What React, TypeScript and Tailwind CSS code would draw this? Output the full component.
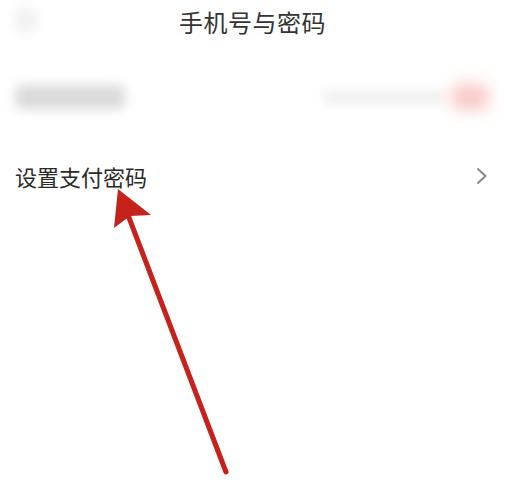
import React from "react";

export default function App() {
  const font = { fontFamily: '"Noto Sans CJK SC", "Noto Sans", sans-serif' };
  return (
    <div className="relative w-[505px] h-[488px] bg-white overflow-hidden" style={font}>
      {/* header */}
      <div className="relative h-[44px] flex items-center justify-center">
        <div className="absolute left-[14px] top-[6px] w-[24px] h-[28px] rounded-full bg-[#f2f2f2] blur-[5px]" />
        <span className="text-[24px] leading-none text-[#333] tracking-[0.5px]">手机号与密码</span>
      </div>
      {/* blurred row */}
      <div className="h-[62px] mt-[22px] flex items-center px-[15px]">
        <div className="w-[110px] h-[24px] bg-[#dadada] rounded-[6px] blur-[6px]" />
        <div className="ml-auto flex items-center gap-[6px]">
          <div className="w-[120px] h-[16px] bg-[#f2f2f2] blur-[5px]" />
          <div className="w-[40px] h-[26px] rounded-full bg-[#f7c9c6] blur-[8px]" />
        </div>
      </div>
      {/* pay password row */}
      <div className="h-[60px] mt-[18px] flex items-center px-[15px]">
        <span className="text-[22px] leading-none text-[#2a2a2a]">设置支付密码</span>
        <svg className="ml-auto mr-[2px]" width="12" height="18" viewBox="0 0 12 18" fill="none">
          <path d="M2 2 L9.5 9 L2 16" stroke="#8a8a8a" strokeWidth="2" strokeLinecap="round" strokeLinejoin="round" />
        </svg>
      </div>
      {/* annotation arrow */}
      <svg className="absolute left-0 top-0 pointer-events-none" width="505" height="488" viewBox="0 0 505 488">
        <line x1="128" y1="215" x2="226" y2="472" stroke="#c4221b" strokeWidth="5" strokeLinecap="round" />
        <polygon points="118,189 151,215 130,216 114,228" fill="#c4221b" />
      </svg>
    </div>
  );
}
